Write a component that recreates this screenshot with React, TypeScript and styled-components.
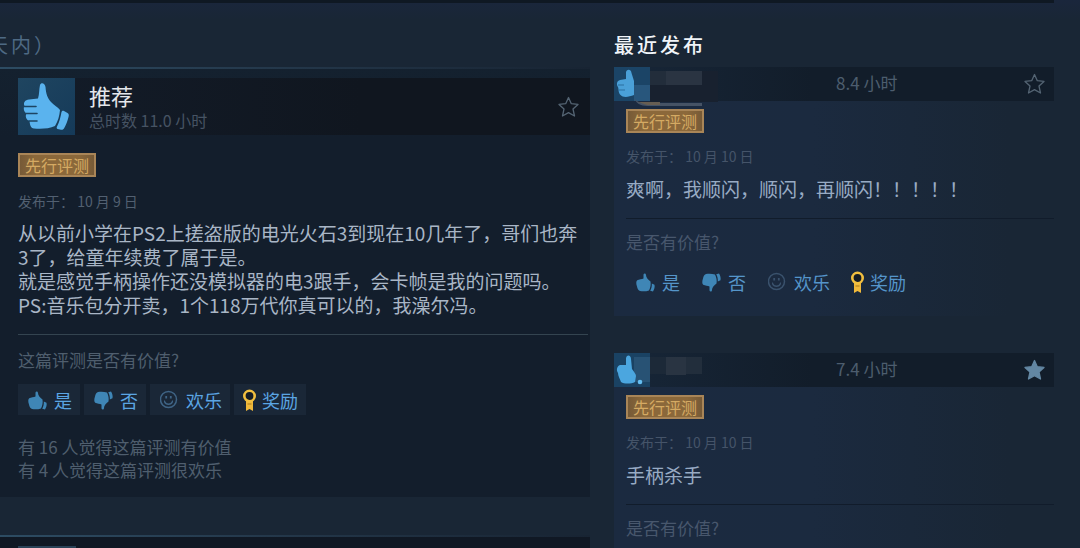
import React from "react";
import styled, { createGlobalStyle } from "styled-components";

const GlobalStyle = createGlobalStyle`
  * { box-sizing: border-box; }
  html { background: #192635; }
  body {
    margin: 0;
    overflow: hidden;
    color: #a9b6c6;
    font-family: "Noto Sans CJK SC", "Noto Sans", sans-serif;
  }
  h2, h3, p { margin: 0; font-weight: 400; }
`;

const Page = styled.main`
  height: 100vh;
  overflow: hidden;
  padding-right: 26px;
  background: linear-gradient(180deg, #1a263c 0, #192635 20px);
`;

const TopRule = styled.div`
  height: 3px;
  background: #0f1823;
`;

const Columns = styled.div`
  display: grid;
  grid-template-columns: minmax(0, 590fr) minmax(0, 440fr);
  column-gap: 24px;
`;

const Column = styled.section`
  min-width: 0;
`;

const PeriodHeading = styled.h2`
  height: 64px;
  padding-top: 28px;
  margin-left: -12px;
  font-size: 20px;
  line-height: 28px;
  letter-spacing: 3px;
  color: #4e6a84;
`;

const RecentHeading = styled.h2`
  height: 64px;
  padding-top: 28px;
  font-size: 20px;
  line-height: 28px;
  letter-spacing: 3px;
  font-weight: 500;
  color: #f0f4f8;
`;

const Review = styled.article`
  position: relative;
  padding: 11px 0 16px 18px;
  margin-bottom: 38px;
  background: linear-gradient(180deg, #14212f 0, #131e2c 70px);

  &::before {
    content: "";
    position: absolute;
    inset: 0 0 auto;
    height: 2px;
    background: linear-gradient(90deg, #2d4c63 0, #24384b 45%, #182433 100%);
  }
`;

const ReviewHeader = styled.header`
  display: flex;
  align-items: center;
  height: 57px;
  padding-right: 10px;
  background: linear-gradient(90deg, #131c29, #10161f 60%);
`;

const Verdict = styled.div`
  flex: 1;
  padding: 0 0 6px 14px;
`;

const VerdictTitle = styled.h3`
  font-size: 22px;
  line-height: 32px;
  color: #e4e7eb;
`;

const Playtime = styled.p`
  font-size: 16px;
  line-height: 18px;
  color: #465363;
`;

const IconButton = styled.button`
  display: flex;
  padding: 0;
  border: 0;
  background: none;
  color: #546473;
  cursor: pointer;
`;

const Tag = styled.span`
  display: block;
  width: max-content;
  height: 24px;
  padding: 0 5px;
  border: 2px solid #a98557;
  font-size: 16px;
  line-height: 20px;
  color: #d5aa63;
  background: linear-gradient(90deg, #765a37, #8b683a 20%, #8b683a 80%, #765a37);
`;

const Posted = styled.p`
  font-size: 14px;
  line-height: 20px;
  white-space: pre;
  color: #526071;
`;

const ReviewText = styled.p`
  font-size: 19px;
  line-height: 24px;
  color: #a9b6c6;
`;

const Question = styled.p`
  font-size: 17px;
  line-height: 24px;
  color: #4f5e6e;
`;

const VoteRow = styled.div`
  display: flex;
  gap: 4px;
`;

const VoteButton = styled.button<{ $flat?: boolean; $tight?: boolean }>`
  display: flex;
  align-items: center;
  gap: 6px;
  height: 31px;
  padding: 0 8px 0 ${(p) => (p.$tight ? 8 : 10)}px;
  border: 0;
  background: ${(p) => (p.$flat ? "transparent" : "#1a2737")};
  font: 400 18px/30px "Noto Sans CJK SC", "Noto Sans", sans-serif;
  color: ${(p) => (p.$flat ? "#5595ca" : "#5ba5e3")};
  cursor: pointer;
`;

const Counts = styled.p`
  font-size: 17px;
  line-height: 23px;
  color: #4f5e6e;
`;

const LargeBody = styled.div`
  padding-top: 18px;

  ${Posted} { margin: 14px 0 10px; }
  ${Question} {
    margin: 17px 0 12px;
    padding-top: 13px;
    margin-right: 2px;
    border-top: 1px solid #344450;
  }
  ${Counts} { margin-top: 20px; }
`;

const CompactReview = styled.article`
  margin-bottom: 37px;
  background: linear-gradient(90deg, #1b2a40, #1b2a3f 45%, #192635 90%);
`;

const CompactHeader = styled.header`
  display: grid;
  grid-template-columns: 222px 1fr auto;
  align-items: center;
  height: 34px;
  padding-right: 8px;
  background: linear-gradient(90deg, #172638, #121d2a 45%);
`;

const Hours = styled.p`
  font-size: 17px;
  line-height: 24px;
  padding-bottom: 2px;
  color: #4d5d6e;
`;

const Author = styled.svg`
  display: block;
  align-self: start;
  overflow: visible;
`;

const CompactBody = styled.div`
  padding: 8px 0 19px 12px;

  ${Posted} { margin: 13px 0 11px; color: #455469; }
  ${ReviewText} { color: #98abc4; }
  ${Question} {
    margin: 17px 0 12px;
    padding-top: 11px;
    border-top: 1px solid #111c2b;
    color: #48576d;
  }
`;

const NextReview = styled(Review)`
  height: 40px;
  margin: 0;
  background: #101824;
`;

const NextThumb = styled.div`
  width: 58px;
  height: 29px;
  background: #2a4257;
`;

const handPath =
  "M22 7C23 4 27 5 27.500 9C28 16 29.500 20 33 24C36 27.500 40 29 42 32C41.500 38 40 43 37 48C31 51 22 51 16 50.500C12.500 50 12 47 11.500 43C8 42 7 38 8.500 35.500C6 34 5 30 6.500 28C5 24.500 7 22 11 21.500L20 20.500C21.500 16 21 11 22 7Z";
const cuffPath =
  "M43.500 34C44 32.500 45 32.500 46 33L49.500 35C51 36 51 37 50.500 39C49.500 43 48 47 46 50.500C45 52 43.500 52 42 51.500L39.500 51C38.500 50.500 38.500 49.500 39 48.500C41.500 44 42.500 39 43.500 34Z";

const BigThumb = () => (
  <svg width="57" height="57" viewBox="0 0 57 57" role="img" aria-label="推荐">
    <defs>
      <linearGradient id="tile" x1="0" y1="0" x2="1" y2="1">
        <stop offset="0" stopColor="#1f4560" />
        <stop offset="1" stopColor="#153a59" />
      </linearGradient>
    </defs>
    <rect width="57" height="57" fill="url(#tile)" />
    <path d={handPath} fill="#5ab3ee" />
    <path d={cuffPath} fill="#5ab3ee" />
    <path d="M6 28.500H18M8 35.500H19M11 43H19" stroke="#1d4462" strokeWidth="1.600" strokeLinecap="round" />
  </svg>
);

const smallHandPath =
  "M7.500 2.500C8 .8 10 1.200 10 3C10 5.500 12 7.500 14.500 9.500C15 12.500 14.500 15.500 13 18.500C10 19.500 6.500 19.500 4 19C2 18.500 1.500 16.500 1 14.500C0 12 0 9 1.200 8.200C3 7.500 6 7 7.500 6.500Z";
const smallCuffPath = "M15.800 11.500L18.500 12.800C19 15 18.300 17.500 17 19.500L14.200 18.800C15.500 16.500 16 14 15.800 11.500Z";

const SmallThumb = ({ down }: { down?: boolean }) => (
  <svg width="20" height="22" viewBox="0 -1 20 22" aria-hidden="true">
    <g fill="#3f86b6" transform={down ? "matrix(1 0 0 -1 0 21)" : undefined}>
      <path d={smallHandPath} />
      <path d={smallCuffPath} />
    </g>
  </svg>
);

const Smile = ({ flat }: { flat?: boolean }) => (
  <svg width="20" height="20" viewBox="0 0 20 20" fill="none" stroke={flat ? "#3a526d" : "#3f6485"} strokeWidth="1.500" aria-hidden="true">
    <circle cx="8.500" cy="9.500" r="8" />
    <path d="M4.500 11.500C6 15.200 11 15.200 12.500 11.500M4 11.300H5M12 11.300H13" />
    <path d="M6.200 6V8.500M10.800 6V8.500" strokeWidth="1.800" />
  </svg>
);

const Award = () => (
  <svg width="14" height="24" viewBox="0 0 14 24" aria-hidden="true">
    <path d="M4 13H11V23L7.500 21L4 23Z" fill="#f0b93a" />
    <circle cx="7.500" cy="8" r="5.200" fill="#151c25" stroke="#f2bf3f" strokeWidth="2.600" />
    <path d="M5.500 16H9.500" stroke="#a9781d" strokeWidth="1" />
  </svg>
);

const Star = ({ filled }: { filled?: boolean }) => (
  <svg width="23" height="24" viewBox="0 0 23 24" aria-hidden="true">
    <path
      d="M11.500 2.500L14.300 8.700L21 9.400L16 14L17.500 21L11.500 17.600L5.500 21L7 14L2 9.400L8.700 8.700Z"
      fill={filled ? "#6387a3" : "none"}
      stroke={filled ? "#6387a3" : "currentColor"}
      strokeWidth="1.300"
      strokeLinejoin="round"
    />
  </svg>
);

const Votes = ({ flat }: { flat?: boolean }) => (
  <VoteRow>
    <VoteButton type="button" $flat={flat}><SmallThumb />是</VoteButton>
    <VoteButton type="button" $flat={flat}><SmallThumb down />否</VoteButton>
    <VoteButton type="button" $flat={flat}><Smile flat={flat} />欢乐</VoteButton>
    <VoteButton type="button" $flat={flat} $tight><Award />奖励</VoteButton>
  </VoteRow>
);

/* Author strip with the user name masked by a mosaic. */
const MaskedAuthorOne = () => (
  <Author width="106" height="34" viewBox="0 0 106 34" aria-hidden="true">
    <rect width="36" height="34" fill="#1b4466" />
    <rect x="20" y="18" width="16" height="16" fill="#28567c" />
    <path d="M12 5C13 2 17 2 17.500 6L20 14V28C15 30 9 31 6.500 28C4 25 5 23 4 20C2 17 3 14 6 13L12 12Z" fill="#4aa0d8" />
    <path d="M4 18H10M5 23H11" stroke="#2b6f9f" />
    <rect x="36" y="4" width="68" height="31" fill="#18212f" />
    <rect x="36" y="4" width="16" height="14" fill="#222d3b" />
    <rect x="52" y="4" width="36" height="14" fill="#2a3442" />
    <path d="M20 31C23 35 26 36 32 36H88V39H34C26 39 22 36 20 31Z" fill="#465365" />
    <path d="M24 35H46V38H33Z" fill="#675e52" />
  </Author>
);

const MaskedAuthorTwo = () => (
  <Author width="106" height="34" viewBox="0 0 106 34" aria-hidden="true">
    <rect width="36" height="34" fill="#1a4263" />
    <rect x="20" y="4" width="16" height="25" fill="#285274" />
    <path d="M12 5C13 1 17 2 17 6L18 16C20 19 22 21 22 23L21 29C17 31 10 31 7 29C6 26 4 23 4 20C2 17 3 13 6 12L12 12Z" fill="#4ba6df" />
    <circle cx="26" cy="29" r="2.300" fill="#65bdf0" />
    <rect x="36" y="4" width="16" height="17" fill="#1c2938" />
    <rect x="52" y="4" width="20" height="18" fill="#293442" />
    <rect x="72" y="4" width="16" height="17" fill="#222e3c" />
  </Author>
);

type CompactProps = {
  author: React.ReactNode;
  hours: string;
  text: string;
  starred?: boolean;
};

const CompactCard = ({ author, hours, text, starred }: CompactProps) => (
  <CompactReview>
    <CompactHeader>
      {author}
      <Hours>{hours} 小时</Hours>
      <IconButton type="button" aria-label="收藏"><Star filled={starred} /></IconButton>
    </CompactHeader>
    <CompactBody>
      <Tag>先行评测</Tag>
      <Posted>发布于： 10 月 10 日</Posted>
      <ReviewText>{text}</ReviewText>
      <Question>是否有价值?</Question>
      <Votes flat />
    </CompactBody>
  </CompactReview>
);

export default function App() {
  return (
    <>
      <GlobalStyle />
      <Page>
        <TopRule />
        <Columns>
          <Column>
            <PeriodHeading>天内）</PeriodHeading>
            <Review>
              <ReviewHeader>
                <BigThumb />
                <Verdict>
                  <VerdictTitle>推荐</VerdictTitle>
                  <Playtime>总时数 11.0 小时</Playtime>
                </Verdict>
                <IconButton type="button" aria-label="收藏"><Star /></IconButton>
              </ReviewHeader>
              <LargeBody>
                <Tag>先行评测</Tag>
                <Posted>发布于： 10 月 9 日</Posted>
                <ReviewText>
                  从以前小学在PS2上搓盗版的电光火石3到现在10几年了，哥们也奔
                  <br />
                  3了，给童年续费了属于是。
                  <br />
                  就是感觉手柄操作还没模拟器的电3跟手，会卡帧是我的问题吗。
                  <br />
                  PS:音乐包分开卖，1个118万代你真可以的，我澡尔冯。
                </ReviewText>
                <Question>这篇评测是否有价值?</Question>
                <Votes />
                <Counts>
                  有 16 人觉得这篇评测有价值
                  <br />
                  有 4 人觉得这篇评测很欢乐
                </Counts>
              </LargeBody>
            </Review>
            <NextReview><NextThumb /></NextReview>
          </Column>
          <Column>
            <RecentHeading>最近发布</RecentHeading>
            <CompactCard author={<MaskedAuthorOne />} hours="8.4" text="爽啊，我顺闪，顺闪，再顺闪！！！！！" />
            <CompactCard author={<MaskedAuthorTwo />} hours="7.4" text="手柄杀手" starred />
          </Column>
        </Columns>
      </Page>
    </>
  );
}
